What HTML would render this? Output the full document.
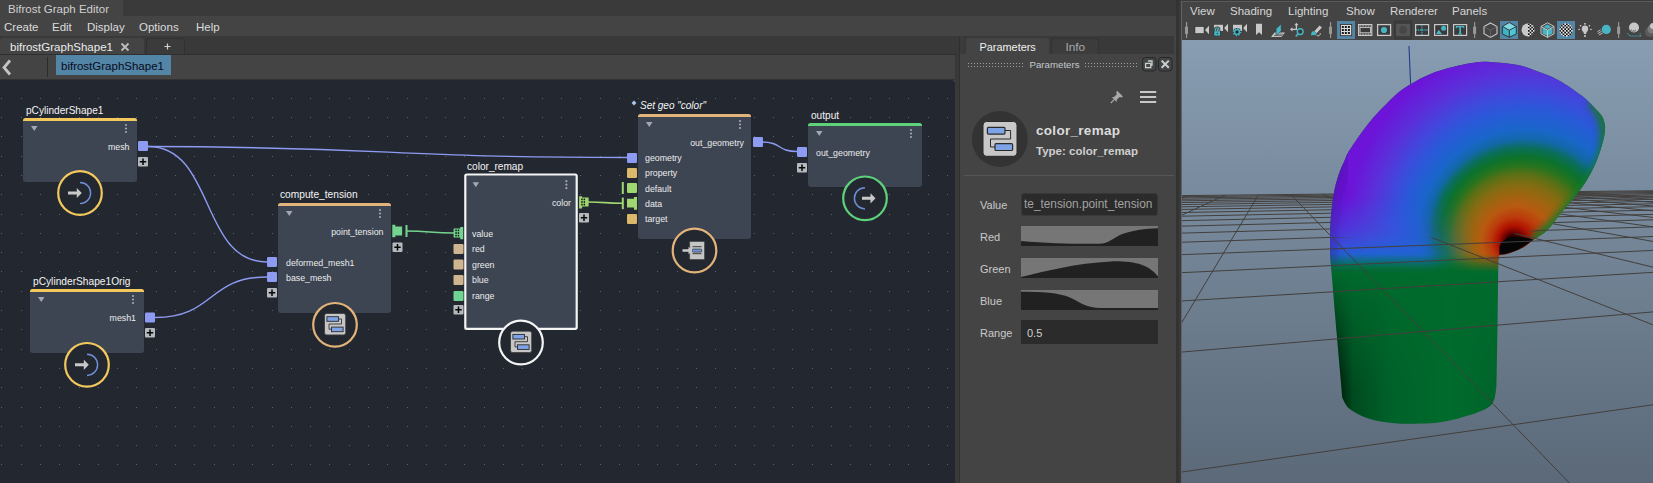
<!DOCTYPE html>
<html><head><meta charset="utf-8">
<style>
*{box-sizing:border-box;margin:0;padding:0}
html,body{width:1653px;height:483px;overflow:hidden;background:#444;font-family:"Liberation Sans",sans-serif;}
.a{position:absolute}
.t{position:absolute;white-space:nowrap;line-height:1}
svg{position:absolute;overflow:visible}
</style></head>
<body>

<div class="a" style="left:0px;top:0px;width:960px;height:16px;background:#3a3a3a;"></div>
<div class="a" style="left:0px;top:0px;width:123px;height:16px;background:#444;"></div>
<div class="t" style="left:8px;top:4px;font-size:11.5px;color:#cfcfcf;">Bifrost Graph Editor</div>
<div class="a" style="left:0px;top:16px;width:960px;height:20px;background:#444;"></div>
<div class="t" style="left:4px;top:22px;font-size:11.5px;color:#dcdcdc;">Create</div>
<div class="t" style="left:52px;top:22px;font-size:11.5px;color:#dcdcdc;">Edit</div>
<div class="t" style="left:87px;top:22px;font-size:11.5px;color:#dcdcdc;">Display</div>
<div class="t" style="left:139px;top:22px;font-size:11.5px;color:#dcdcdc;">Options</div>
<div class="t" style="left:196px;top:22px;font-size:11.5px;color:#dcdcdc;">Help</div>
<div class="a" style="left:0px;top:36px;width:959px;height:19px;background:#393939;"></div>
<div class="a" style="left:0px;top:38px;width:144px;height:16px;background:#444;border-radius:3px 3px 0 0"></div>
<div class="t" style="left:10px;top:41.6px;font-size:11.5px;color:#ececec;">bifrostGraphShape1</div>
<svg style="left:120px;top:42px" width="10" height="10"><path d="M1.5 1.5L8.5 8.5M8.5 1.5L1.5 8.5" stroke="#bdbdbd" stroke-width="1.8"/></svg>
<div class="a" style="left:146px;top:38px;width:39px;height:16px;background:#3b3b3b;border:1px solid #313131;border-bottom:none;border-radius:3px 3px 0 0"></div>
<svg style="left:163.5px;top:43px" width="8" height="8"><path d="M3.5 0.4V6.6M0.4 3.5H6.6" stroke="#d4d0cc" stroke-width="1.2"/></svg>
<div class="a" style="left:0px;top:54px;width:957px;height:1px;background:#2f2f2f;"></div>
<div class="a" style="left:0px;top:55px;width:957px;height:25px;background:#444;"></div>
<svg style="left:0;top:55px" width="50" height="25"><path d="M10 5.5 L4 12.5 L10 19.5" fill="none" stroke="#c4c4c4" stroke-width="2.8"/><rect x="47" y="2" width="1" height="20" fill="#2b2b2b"/></svg>
<div class="a" style="left:56px;top:55px;width:115px;height:20px;background:#5285a6;"></div>
<div class="t" style="left:61px;top:61px;font-size:11.5px;color:#0a0a1a;">bifrostGraphShape1</div>
<div class="a" style="left:0px;top:79px;width:957px;height:1px;background:#333;"></div>
<div class="a" style="left:0;top:80px;width:955px;height:403px;background:#232830;border-radius:0 4px 0 0;overflow:hidden">
<svg style="left:0;top:0" width="955" height="403"><path d="M1 18h1v1h-1zM21 18h1v1h-1zM40 18h1v1h-1zM59 18h1v1h-1zM79 18h1v1h-1zM98 18h1v1h-1zM117 18h1v1h-1zM136 18h1v1h-1zM156 18h1v1h-1zM175 18h1v1h-1zM194 18h1v1h-1zM214 18h1v1h-1zM233 18h1v1h-1zM252 18h1v1h-1zM272 18h1v1h-1zM291 18h1v1h-1zM310 18h1v1h-1zM329 18h1v1h-1zM349 18h1v1h-1zM368 18h1v1h-1zM387 18h1v1h-1zM407 18h1v1h-1zM426 18h1v1h-1zM445 18h1v1h-1zM464 18h1v1h-1zM484 18h1v1h-1zM503 18h1v1h-1zM522 18h1v1h-1zM542 18h1v1h-1zM561 18h1v1h-1zM580 18h1v1h-1zM600 18h1v1h-1zM619 18h1v1h-1zM638 18h1v1h-1zM657 18h1v1h-1zM677 18h1v1h-1zM696 18h1v1h-1zM715 18h1v1h-1zM735 18h1v1h-1zM754 18h1v1h-1zM773 18h1v1h-1zM792 18h1v1h-1zM812 18h1v1h-1zM831 18h1v1h-1zM850 18h1v1h-1zM870 18h1v1h-1zM889 18h1v1h-1zM908 18h1v1h-1zM928 18h1v1h-1zM947 18h1v1h-1zM1 37h1v1h-1zM21 37h1v1h-1zM40 37h1v1h-1zM59 37h1v1h-1zM79 37h1v1h-1zM98 37h1v1h-1zM117 37h1v1h-1zM136 37h1v1h-1zM156 37h1v1h-1zM175 37h1v1h-1zM194 37h1v1h-1zM214 37h1v1h-1zM233 37h1v1h-1zM252 37h1v1h-1zM272 37h1v1h-1zM291 37h1v1h-1zM310 37h1v1h-1zM329 37h1v1h-1zM349 37h1v1h-1zM368 37h1v1h-1zM387 37h1v1h-1zM407 37h1v1h-1zM426 37h1v1h-1zM445 37h1v1h-1zM464 37h1v1h-1zM484 37h1v1h-1zM503 37h1v1h-1zM522 37h1v1h-1zM542 37h1v1h-1zM561 37h1v1h-1zM580 37h1v1h-1zM600 37h1v1h-1zM619 37h1v1h-1zM638 37h1v1h-1zM657 37h1v1h-1zM677 37h1v1h-1zM696 37h1v1h-1zM715 37h1v1h-1zM735 37h1v1h-1zM754 37h1v1h-1zM773 37h1v1h-1zM792 37h1v1h-1zM812 37h1v1h-1zM831 37h1v1h-1zM850 37h1v1h-1zM870 37h1v1h-1zM889 37h1v1h-1zM908 37h1v1h-1zM928 37h1v1h-1zM947 37h1v1h-1zM1 56h1v1h-1zM21 56h1v1h-1zM40 56h1v1h-1zM59 56h1v1h-1zM79 56h1v1h-1zM98 56h1v1h-1zM117 56h1v1h-1zM136 56h1v1h-1zM156 56h1v1h-1zM175 56h1v1h-1zM194 56h1v1h-1zM214 56h1v1h-1zM233 56h1v1h-1zM252 56h1v1h-1zM272 56h1v1h-1zM291 56h1v1h-1zM310 56h1v1h-1zM329 56h1v1h-1zM349 56h1v1h-1zM368 56h1v1h-1zM387 56h1v1h-1zM407 56h1v1h-1zM426 56h1v1h-1zM445 56h1v1h-1zM464 56h1v1h-1zM484 56h1v1h-1zM503 56h1v1h-1zM522 56h1v1h-1zM542 56h1v1h-1zM561 56h1v1h-1zM580 56h1v1h-1zM600 56h1v1h-1zM619 56h1v1h-1zM638 56h1v1h-1zM657 56h1v1h-1zM677 56h1v1h-1zM696 56h1v1h-1zM715 56h1v1h-1zM735 56h1v1h-1zM754 56h1v1h-1zM773 56h1v1h-1zM792 56h1v1h-1zM812 56h1v1h-1zM831 56h1v1h-1zM850 56h1v1h-1zM870 56h1v1h-1zM889 56h1v1h-1zM908 56h1v1h-1zM928 56h1v1h-1zM947 56h1v1h-1zM1 76h1v1h-1zM21 76h1v1h-1zM40 76h1v1h-1zM59 76h1v1h-1zM79 76h1v1h-1zM98 76h1v1h-1zM117 76h1v1h-1zM136 76h1v1h-1zM156 76h1v1h-1zM175 76h1v1h-1zM194 76h1v1h-1zM214 76h1v1h-1zM233 76h1v1h-1zM252 76h1v1h-1zM272 76h1v1h-1zM291 76h1v1h-1zM310 76h1v1h-1zM329 76h1v1h-1zM349 76h1v1h-1zM368 76h1v1h-1zM387 76h1v1h-1zM407 76h1v1h-1zM426 76h1v1h-1zM445 76h1v1h-1zM464 76h1v1h-1zM484 76h1v1h-1zM503 76h1v1h-1zM522 76h1v1h-1zM542 76h1v1h-1zM561 76h1v1h-1zM580 76h1v1h-1zM600 76h1v1h-1zM619 76h1v1h-1zM638 76h1v1h-1zM657 76h1v1h-1zM677 76h1v1h-1zM696 76h1v1h-1zM715 76h1v1h-1zM735 76h1v1h-1zM754 76h1v1h-1zM773 76h1v1h-1zM792 76h1v1h-1zM812 76h1v1h-1zM831 76h1v1h-1zM850 76h1v1h-1zM870 76h1v1h-1zM889 76h1v1h-1zM908 76h1v1h-1zM928 76h1v1h-1zM947 76h1v1h-1zM1 95h1v1h-1zM21 95h1v1h-1zM40 95h1v1h-1zM59 95h1v1h-1zM79 95h1v1h-1zM98 95h1v1h-1zM117 95h1v1h-1zM136 95h1v1h-1zM156 95h1v1h-1zM175 95h1v1h-1zM194 95h1v1h-1zM214 95h1v1h-1zM233 95h1v1h-1zM252 95h1v1h-1zM272 95h1v1h-1zM291 95h1v1h-1zM310 95h1v1h-1zM329 95h1v1h-1zM349 95h1v1h-1zM368 95h1v1h-1zM387 95h1v1h-1zM407 95h1v1h-1zM426 95h1v1h-1zM445 95h1v1h-1zM464 95h1v1h-1zM484 95h1v1h-1zM503 95h1v1h-1zM522 95h1v1h-1zM542 95h1v1h-1zM561 95h1v1h-1zM580 95h1v1h-1zM600 95h1v1h-1zM619 95h1v1h-1zM638 95h1v1h-1zM657 95h1v1h-1zM677 95h1v1h-1zM696 95h1v1h-1zM715 95h1v1h-1zM735 95h1v1h-1zM754 95h1v1h-1zM773 95h1v1h-1zM792 95h1v1h-1zM812 95h1v1h-1zM831 95h1v1h-1zM850 95h1v1h-1zM870 95h1v1h-1zM889 95h1v1h-1zM908 95h1v1h-1zM928 95h1v1h-1zM947 95h1v1h-1zM1 114h1v1h-1zM21 114h1v1h-1zM40 114h1v1h-1zM59 114h1v1h-1zM79 114h1v1h-1zM98 114h1v1h-1zM117 114h1v1h-1zM136 114h1v1h-1zM156 114h1v1h-1zM175 114h1v1h-1zM194 114h1v1h-1zM214 114h1v1h-1zM233 114h1v1h-1zM252 114h1v1h-1zM272 114h1v1h-1zM291 114h1v1h-1zM310 114h1v1h-1zM329 114h1v1h-1zM349 114h1v1h-1zM368 114h1v1h-1zM387 114h1v1h-1zM407 114h1v1h-1zM426 114h1v1h-1zM445 114h1v1h-1zM464 114h1v1h-1zM484 114h1v1h-1zM503 114h1v1h-1zM522 114h1v1h-1zM542 114h1v1h-1zM561 114h1v1h-1zM580 114h1v1h-1zM600 114h1v1h-1zM619 114h1v1h-1zM638 114h1v1h-1zM657 114h1v1h-1zM677 114h1v1h-1zM696 114h1v1h-1zM715 114h1v1h-1zM735 114h1v1h-1zM754 114h1v1h-1zM773 114h1v1h-1zM792 114h1v1h-1zM812 114h1v1h-1zM831 114h1v1h-1zM850 114h1v1h-1zM870 114h1v1h-1zM889 114h1v1h-1zM908 114h1v1h-1zM928 114h1v1h-1zM947 114h1v1h-1zM1 134h1v1h-1zM21 134h1v1h-1zM40 134h1v1h-1zM59 134h1v1h-1zM79 134h1v1h-1zM98 134h1v1h-1zM117 134h1v1h-1zM136 134h1v1h-1zM156 134h1v1h-1zM175 134h1v1h-1zM194 134h1v1h-1zM214 134h1v1h-1zM233 134h1v1h-1zM252 134h1v1h-1zM272 134h1v1h-1zM291 134h1v1h-1zM310 134h1v1h-1zM329 134h1v1h-1zM349 134h1v1h-1zM368 134h1v1h-1zM387 134h1v1h-1zM407 134h1v1h-1zM426 134h1v1h-1zM445 134h1v1h-1zM464 134h1v1h-1zM484 134h1v1h-1zM503 134h1v1h-1zM522 134h1v1h-1zM542 134h1v1h-1zM561 134h1v1h-1zM580 134h1v1h-1zM600 134h1v1h-1zM619 134h1v1h-1zM638 134h1v1h-1zM657 134h1v1h-1zM677 134h1v1h-1zM696 134h1v1h-1zM715 134h1v1h-1zM735 134h1v1h-1zM754 134h1v1h-1zM773 134h1v1h-1zM792 134h1v1h-1zM812 134h1v1h-1zM831 134h1v1h-1zM850 134h1v1h-1zM870 134h1v1h-1zM889 134h1v1h-1zM908 134h1v1h-1zM928 134h1v1h-1zM947 134h1v1h-1zM1 153h1v1h-1zM21 153h1v1h-1zM40 153h1v1h-1zM59 153h1v1h-1zM79 153h1v1h-1zM98 153h1v1h-1zM117 153h1v1h-1zM136 153h1v1h-1zM156 153h1v1h-1zM175 153h1v1h-1zM194 153h1v1h-1zM214 153h1v1h-1zM233 153h1v1h-1zM252 153h1v1h-1zM272 153h1v1h-1zM291 153h1v1h-1zM310 153h1v1h-1zM329 153h1v1h-1zM349 153h1v1h-1zM368 153h1v1h-1zM387 153h1v1h-1zM407 153h1v1h-1zM426 153h1v1h-1zM445 153h1v1h-1zM464 153h1v1h-1zM484 153h1v1h-1zM503 153h1v1h-1zM522 153h1v1h-1zM542 153h1v1h-1zM561 153h1v1h-1zM580 153h1v1h-1zM600 153h1v1h-1zM619 153h1v1h-1zM638 153h1v1h-1zM657 153h1v1h-1zM677 153h1v1h-1zM696 153h1v1h-1zM715 153h1v1h-1zM735 153h1v1h-1zM754 153h1v1h-1zM773 153h1v1h-1zM792 153h1v1h-1zM812 153h1v1h-1zM831 153h1v1h-1zM850 153h1v1h-1zM870 153h1v1h-1zM889 153h1v1h-1zM908 153h1v1h-1zM928 153h1v1h-1zM947 153h1v1h-1zM1 172h1v1h-1zM21 172h1v1h-1zM40 172h1v1h-1zM59 172h1v1h-1zM79 172h1v1h-1zM98 172h1v1h-1zM117 172h1v1h-1zM136 172h1v1h-1zM156 172h1v1h-1zM175 172h1v1h-1zM194 172h1v1h-1zM214 172h1v1h-1zM233 172h1v1h-1zM252 172h1v1h-1zM272 172h1v1h-1zM291 172h1v1h-1zM310 172h1v1h-1zM329 172h1v1h-1zM349 172h1v1h-1zM368 172h1v1h-1zM387 172h1v1h-1zM407 172h1v1h-1zM426 172h1v1h-1zM445 172h1v1h-1zM464 172h1v1h-1zM484 172h1v1h-1zM503 172h1v1h-1zM522 172h1v1h-1zM542 172h1v1h-1zM561 172h1v1h-1zM580 172h1v1h-1zM600 172h1v1h-1zM619 172h1v1h-1zM638 172h1v1h-1zM657 172h1v1h-1zM677 172h1v1h-1zM696 172h1v1h-1zM715 172h1v1h-1zM735 172h1v1h-1zM754 172h1v1h-1zM773 172h1v1h-1zM792 172h1v1h-1zM812 172h1v1h-1zM831 172h1v1h-1zM850 172h1v1h-1zM870 172h1v1h-1zM889 172h1v1h-1zM908 172h1v1h-1zM928 172h1v1h-1zM947 172h1v1h-1zM1 191h1v1h-1zM21 191h1v1h-1zM40 191h1v1h-1zM59 191h1v1h-1zM79 191h1v1h-1zM98 191h1v1h-1zM117 191h1v1h-1zM136 191h1v1h-1zM156 191h1v1h-1zM175 191h1v1h-1zM194 191h1v1h-1zM214 191h1v1h-1zM233 191h1v1h-1zM252 191h1v1h-1zM272 191h1v1h-1zM291 191h1v1h-1zM310 191h1v1h-1zM329 191h1v1h-1zM349 191h1v1h-1zM368 191h1v1h-1zM387 191h1v1h-1zM407 191h1v1h-1zM426 191h1v1h-1zM445 191h1v1h-1zM464 191h1v1h-1zM484 191h1v1h-1zM503 191h1v1h-1zM522 191h1v1h-1zM542 191h1v1h-1zM561 191h1v1h-1zM580 191h1v1h-1zM600 191h1v1h-1zM619 191h1v1h-1zM638 191h1v1h-1zM657 191h1v1h-1zM677 191h1v1h-1zM696 191h1v1h-1zM715 191h1v1h-1zM735 191h1v1h-1zM754 191h1v1h-1zM773 191h1v1h-1zM792 191h1v1h-1zM812 191h1v1h-1zM831 191h1v1h-1zM850 191h1v1h-1zM870 191h1v1h-1zM889 191h1v1h-1zM908 191h1v1h-1zM928 191h1v1h-1zM947 191h1v1h-1zM1 211h1v1h-1zM21 211h1v1h-1zM40 211h1v1h-1zM59 211h1v1h-1zM79 211h1v1h-1zM98 211h1v1h-1zM117 211h1v1h-1zM136 211h1v1h-1zM156 211h1v1h-1zM175 211h1v1h-1zM194 211h1v1h-1zM214 211h1v1h-1zM233 211h1v1h-1zM252 211h1v1h-1zM272 211h1v1h-1zM291 211h1v1h-1zM310 211h1v1h-1zM329 211h1v1h-1zM349 211h1v1h-1zM368 211h1v1h-1zM387 211h1v1h-1zM407 211h1v1h-1zM426 211h1v1h-1zM445 211h1v1h-1zM464 211h1v1h-1zM484 211h1v1h-1zM503 211h1v1h-1zM522 211h1v1h-1zM542 211h1v1h-1zM561 211h1v1h-1zM580 211h1v1h-1zM600 211h1v1h-1zM619 211h1v1h-1zM638 211h1v1h-1zM657 211h1v1h-1zM677 211h1v1h-1zM696 211h1v1h-1zM715 211h1v1h-1zM735 211h1v1h-1zM754 211h1v1h-1zM773 211h1v1h-1zM792 211h1v1h-1zM812 211h1v1h-1zM831 211h1v1h-1zM850 211h1v1h-1zM870 211h1v1h-1zM889 211h1v1h-1zM908 211h1v1h-1zM928 211h1v1h-1zM947 211h1v1h-1zM1 230h1v1h-1zM21 230h1v1h-1zM40 230h1v1h-1zM59 230h1v1h-1zM79 230h1v1h-1zM98 230h1v1h-1zM117 230h1v1h-1zM136 230h1v1h-1zM156 230h1v1h-1zM175 230h1v1h-1zM194 230h1v1h-1zM214 230h1v1h-1zM233 230h1v1h-1zM252 230h1v1h-1zM272 230h1v1h-1zM291 230h1v1h-1zM310 230h1v1h-1zM329 230h1v1h-1zM349 230h1v1h-1zM368 230h1v1h-1zM387 230h1v1h-1zM407 230h1v1h-1zM426 230h1v1h-1zM445 230h1v1h-1zM464 230h1v1h-1zM484 230h1v1h-1zM503 230h1v1h-1zM522 230h1v1h-1zM542 230h1v1h-1zM561 230h1v1h-1zM580 230h1v1h-1zM600 230h1v1h-1zM619 230h1v1h-1zM638 230h1v1h-1zM657 230h1v1h-1zM677 230h1v1h-1zM696 230h1v1h-1zM715 230h1v1h-1zM735 230h1v1h-1zM754 230h1v1h-1zM773 230h1v1h-1zM792 230h1v1h-1zM812 230h1v1h-1zM831 230h1v1h-1zM850 230h1v1h-1zM870 230h1v1h-1zM889 230h1v1h-1zM908 230h1v1h-1zM928 230h1v1h-1zM947 230h1v1h-1zM1 249h1v1h-1zM21 249h1v1h-1zM40 249h1v1h-1zM59 249h1v1h-1zM79 249h1v1h-1zM98 249h1v1h-1zM117 249h1v1h-1zM136 249h1v1h-1zM156 249h1v1h-1zM175 249h1v1h-1zM194 249h1v1h-1zM214 249h1v1h-1zM233 249h1v1h-1zM252 249h1v1h-1zM272 249h1v1h-1zM291 249h1v1h-1zM310 249h1v1h-1zM329 249h1v1h-1zM349 249h1v1h-1zM368 249h1v1h-1zM387 249h1v1h-1zM407 249h1v1h-1zM426 249h1v1h-1zM445 249h1v1h-1zM464 249h1v1h-1zM484 249h1v1h-1zM503 249h1v1h-1zM522 249h1v1h-1zM542 249h1v1h-1zM561 249h1v1h-1zM580 249h1v1h-1zM600 249h1v1h-1zM619 249h1v1h-1zM638 249h1v1h-1zM657 249h1v1h-1zM677 249h1v1h-1zM696 249h1v1h-1zM715 249h1v1h-1zM735 249h1v1h-1zM754 249h1v1h-1zM773 249h1v1h-1zM792 249h1v1h-1zM812 249h1v1h-1zM831 249h1v1h-1zM850 249h1v1h-1zM870 249h1v1h-1zM889 249h1v1h-1zM908 249h1v1h-1zM928 249h1v1h-1zM947 249h1v1h-1zM1 269h1v1h-1zM21 269h1v1h-1zM40 269h1v1h-1zM59 269h1v1h-1zM79 269h1v1h-1zM98 269h1v1h-1zM117 269h1v1h-1zM136 269h1v1h-1zM156 269h1v1h-1zM175 269h1v1h-1zM194 269h1v1h-1zM214 269h1v1h-1zM233 269h1v1h-1zM252 269h1v1h-1zM272 269h1v1h-1zM291 269h1v1h-1zM310 269h1v1h-1zM329 269h1v1h-1zM349 269h1v1h-1zM368 269h1v1h-1zM387 269h1v1h-1zM407 269h1v1h-1zM426 269h1v1h-1zM445 269h1v1h-1zM464 269h1v1h-1zM484 269h1v1h-1zM503 269h1v1h-1zM522 269h1v1h-1zM542 269h1v1h-1zM561 269h1v1h-1zM580 269h1v1h-1zM600 269h1v1h-1zM619 269h1v1h-1zM638 269h1v1h-1zM657 269h1v1h-1zM677 269h1v1h-1zM696 269h1v1h-1zM715 269h1v1h-1zM735 269h1v1h-1zM754 269h1v1h-1zM773 269h1v1h-1zM792 269h1v1h-1zM812 269h1v1h-1zM831 269h1v1h-1zM850 269h1v1h-1zM870 269h1v1h-1zM889 269h1v1h-1zM908 269h1v1h-1zM928 269h1v1h-1zM947 269h1v1h-1zM1 288h1v1h-1zM21 288h1v1h-1zM40 288h1v1h-1zM59 288h1v1h-1zM79 288h1v1h-1zM98 288h1v1h-1zM117 288h1v1h-1zM136 288h1v1h-1zM156 288h1v1h-1zM175 288h1v1h-1zM194 288h1v1h-1zM214 288h1v1h-1zM233 288h1v1h-1zM252 288h1v1h-1zM272 288h1v1h-1zM291 288h1v1h-1zM310 288h1v1h-1zM329 288h1v1h-1zM349 288h1v1h-1zM368 288h1v1h-1zM387 288h1v1h-1zM407 288h1v1h-1zM426 288h1v1h-1zM445 288h1v1h-1zM464 288h1v1h-1zM484 288h1v1h-1zM503 288h1v1h-1zM522 288h1v1h-1zM542 288h1v1h-1zM561 288h1v1h-1zM580 288h1v1h-1zM600 288h1v1h-1zM619 288h1v1h-1zM638 288h1v1h-1zM657 288h1v1h-1zM677 288h1v1h-1zM696 288h1v1h-1zM715 288h1v1h-1zM735 288h1v1h-1zM754 288h1v1h-1zM773 288h1v1h-1zM792 288h1v1h-1zM812 288h1v1h-1zM831 288h1v1h-1zM850 288h1v1h-1zM870 288h1v1h-1zM889 288h1v1h-1zM908 288h1v1h-1zM928 288h1v1h-1zM947 288h1v1h-1zM1 307h1v1h-1zM21 307h1v1h-1zM40 307h1v1h-1zM59 307h1v1h-1zM79 307h1v1h-1zM98 307h1v1h-1zM117 307h1v1h-1zM136 307h1v1h-1zM156 307h1v1h-1zM175 307h1v1h-1zM194 307h1v1h-1zM214 307h1v1h-1zM233 307h1v1h-1zM252 307h1v1h-1zM272 307h1v1h-1zM291 307h1v1h-1zM310 307h1v1h-1zM329 307h1v1h-1zM349 307h1v1h-1zM368 307h1v1h-1zM387 307h1v1h-1zM407 307h1v1h-1zM426 307h1v1h-1zM445 307h1v1h-1zM464 307h1v1h-1zM484 307h1v1h-1zM503 307h1v1h-1zM522 307h1v1h-1zM542 307h1v1h-1zM561 307h1v1h-1zM580 307h1v1h-1zM600 307h1v1h-1zM619 307h1v1h-1zM638 307h1v1h-1zM657 307h1v1h-1zM677 307h1v1h-1zM696 307h1v1h-1zM715 307h1v1h-1zM735 307h1v1h-1zM754 307h1v1h-1zM773 307h1v1h-1zM792 307h1v1h-1zM812 307h1v1h-1zM831 307h1v1h-1zM850 307h1v1h-1zM870 307h1v1h-1zM889 307h1v1h-1zM908 307h1v1h-1zM928 307h1v1h-1zM947 307h1v1h-1zM1 327h1v1h-1zM21 327h1v1h-1zM40 327h1v1h-1zM59 327h1v1h-1zM79 327h1v1h-1zM98 327h1v1h-1zM117 327h1v1h-1zM136 327h1v1h-1zM156 327h1v1h-1zM175 327h1v1h-1zM194 327h1v1h-1zM214 327h1v1h-1zM233 327h1v1h-1zM252 327h1v1h-1zM272 327h1v1h-1zM291 327h1v1h-1zM310 327h1v1h-1zM329 327h1v1h-1zM349 327h1v1h-1zM368 327h1v1h-1zM387 327h1v1h-1zM407 327h1v1h-1zM426 327h1v1h-1zM445 327h1v1h-1zM464 327h1v1h-1zM484 327h1v1h-1zM503 327h1v1h-1zM522 327h1v1h-1zM542 327h1v1h-1zM561 327h1v1h-1zM580 327h1v1h-1zM600 327h1v1h-1zM619 327h1v1h-1zM638 327h1v1h-1zM657 327h1v1h-1zM677 327h1v1h-1zM696 327h1v1h-1zM715 327h1v1h-1zM735 327h1v1h-1zM754 327h1v1h-1zM773 327h1v1h-1zM792 327h1v1h-1zM812 327h1v1h-1zM831 327h1v1h-1zM850 327h1v1h-1zM870 327h1v1h-1zM889 327h1v1h-1zM908 327h1v1h-1zM928 327h1v1h-1zM947 327h1v1h-1zM1 346h1v1h-1zM21 346h1v1h-1zM40 346h1v1h-1zM59 346h1v1h-1zM79 346h1v1h-1zM98 346h1v1h-1zM117 346h1v1h-1zM136 346h1v1h-1zM156 346h1v1h-1zM175 346h1v1h-1zM194 346h1v1h-1zM214 346h1v1h-1zM233 346h1v1h-1zM252 346h1v1h-1zM272 346h1v1h-1zM291 346h1v1h-1zM310 346h1v1h-1zM329 346h1v1h-1zM349 346h1v1h-1zM368 346h1v1h-1zM387 346h1v1h-1zM407 346h1v1h-1zM426 346h1v1h-1zM445 346h1v1h-1zM464 346h1v1h-1zM484 346h1v1h-1zM503 346h1v1h-1zM522 346h1v1h-1zM542 346h1v1h-1zM561 346h1v1h-1zM580 346h1v1h-1zM600 346h1v1h-1zM619 346h1v1h-1zM638 346h1v1h-1zM657 346h1v1h-1zM677 346h1v1h-1zM696 346h1v1h-1zM715 346h1v1h-1zM735 346h1v1h-1zM754 346h1v1h-1zM773 346h1v1h-1zM792 346h1v1h-1zM812 346h1v1h-1zM831 346h1v1h-1zM850 346h1v1h-1zM870 346h1v1h-1zM889 346h1v1h-1zM908 346h1v1h-1zM928 346h1v1h-1zM947 346h1v1h-1zM1 365h1v1h-1zM21 365h1v1h-1zM40 365h1v1h-1zM59 365h1v1h-1zM79 365h1v1h-1zM98 365h1v1h-1zM117 365h1v1h-1zM136 365h1v1h-1zM156 365h1v1h-1zM175 365h1v1h-1zM194 365h1v1h-1zM214 365h1v1h-1zM233 365h1v1h-1zM252 365h1v1h-1zM272 365h1v1h-1zM291 365h1v1h-1zM310 365h1v1h-1zM329 365h1v1h-1zM349 365h1v1h-1zM368 365h1v1h-1zM387 365h1v1h-1zM407 365h1v1h-1zM426 365h1v1h-1zM445 365h1v1h-1zM464 365h1v1h-1zM484 365h1v1h-1zM503 365h1v1h-1zM522 365h1v1h-1zM542 365h1v1h-1zM561 365h1v1h-1zM580 365h1v1h-1zM600 365h1v1h-1zM619 365h1v1h-1zM638 365h1v1h-1zM657 365h1v1h-1zM677 365h1v1h-1zM696 365h1v1h-1zM715 365h1v1h-1zM735 365h1v1h-1zM754 365h1v1h-1zM773 365h1v1h-1zM792 365h1v1h-1zM812 365h1v1h-1zM831 365h1v1h-1zM850 365h1v1h-1zM870 365h1v1h-1zM889 365h1v1h-1zM908 365h1v1h-1zM928 365h1v1h-1zM947 365h1v1h-1zM1 384h1v1h-1zM21 384h1v1h-1zM40 384h1v1h-1zM59 384h1v1h-1zM79 384h1v1h-1zM98 384h1v1h-1zM117 384h1v1h-1zM136 384h1v1h-1zM156 384h1v1h-1zM175 384h1v1h-1zM194 384h1v1h-1zM214 384h1v1h-1zM233 384h1v1h-1zM252 384h1v1h-1zM272 384h1v1h-1zM291 384h1v1h-1zM310 384h1v1h-1zM329 384h1v1h-1zM349 384h1v1h-1zM368 384h1v1h-1zM387 384h1v1h-1zM407 384h1v1h-1zM426 384h1v1h-1zM445 384h1v1h-1zM464 384h1v1h-1zM484 384h1v1h-1zM503 384h1v1h-1zM522 384h1v1h-1zM542 384h1v1h-1zM561 384h1v1h-1zM580 384h1v1h-1zM600 384h1v1h-1zM619 384h1v1h-1zM638 384h1v1h-1zM657 384h1v1h-1zM677 384h1v1h-1zM696 384h1v1h-1zM715 384h1v1h-1zM735 384h1v1h-1zM754 384h1v1h-1zM773 384h1v1h-1zM792 384h1v1h-1zM812 384h1v1h-1zM831 384h1v1h-1zM850 384h1v1h-1zM870 384h1v1h-1zM889 384h1v1h-1zM908 384h1v1h-1zM928 384h1v1h-1zM947 384h1v1h-1z" fill="#59606a"/></svg>
</div>
<svg style="left:0;top:0" width="955" height="483"><path d="M148 146.5 C 390 147, 390 157.5, 627 157.5" fill="none" stroke="#8e9bf3" stroke-width="1.4"/><path d="M148 146.5 C 215 146.5, 200 262, 267 262" fill="none" stroke="#8e9bf3" stroke-width="1.4"/><path d="M155 317.5 C 215 317.5, 207 277, 267 277" fill="none" stroke="#8e9bf3" stroke-width="1.4"/><path d="M762 142 C 782 142, 777 151.5, 797 151.5" fill="none" stroke="#8e9bf3" stroke-width="1.4"/><path d="M406 231 C 430 231, 430 233, 454 233" fill="none" stroke="#74d48f" stroke-width="1.6"/><rect x="405.5" y="225" width="2" height="12" fill="#74d48f"/><path d="M588 202 C 605 202, 605 203.3, 622 203.3" fill="none" stroke="#9fd770" stroke-width="1.6"/><rect x="621.8" y="197.6" width="2" height="11.6" fill="#9fd770"/><rect x="621.8" y="182" width="2" height="12" fill="#9fd770"/><rect x="23" y="118" width="114" height="64" rx="3" fill="#3d4553"/><path d="M23 121V120.5a2.5 2.5 0 0 1 2.5 -2.5H134.5a2.5 2.5 0 0 1 2.5 2.5V121z" fill="#f3c95d"/><path d="M31 126H37.5L34.25 131z" fill="#a3a8b0"/><circle cx="126" cy="125.0" r="1.1" fill="#a3a8b0"/><circle cx="126" cy="128.5" r="1.1" fill="#a3a8b0"/><circle cx="126" cy="132.0" r="1.1" fill="#a3a8b0"/><rect x="30" y="289" width="114" height="64" rx="3" fill="#3d4553"/><path d="M30 292V291.5a2.5 2.5 0 0 1 2.5 -2.5H141.5a2.5 2.5 0 0 1 2.5 2.5V292z" fill="#f3c95d"/><path d="M38 297H44.5L41.25 302z" fill="#a3a8b0"/><circle cx="133" cy="296.0" r="1.1" fill="#a3a8b0"/><circle cx="133" cy="299.5" r="1.1" fill="#a3a8b0"/><circle cx="133" cy="303.0" r="1.1" fill="#a3a8b0"/><rect x="278" y="203" width="113" height="110" rx="3" fill="#3d4553"/><path d="M278 206V205.5a2.5 2.5 0 0 1 2.5 -2.5H388.5a2.5 2.5 0 0 1 2.5 2.5V206z" fill="#e3b47a"/><path d="M286 211H292.5L289.25 216z" fill="#a3a8b0"/><circle cx="380" cy="210.0" r="1.1" fill="#a3a8b0"/><circle cx="380" cy="213.5" r="1.1" fill="#a3a8b0"/><circle cx="380" cy="217.0" r="1.1" fill="#a3a8b0"/><rect x="465.3" y="174.5" width="111.39999999999999" height="154.3" rx="1.5" fill="#3d4553" stroke="#f4f4f4" stroke-width="2.2"/><path d="M472.6 182.2H479.1L475.85 187.2z" fill="#a3a8b0"/><circle cx="566.4" cy="181.2" r="1.1" fill="#a3a8b0"/><circle cx="566.4" cy="184.7" r="1.1" fill="#a3a8b0"/><circle cx="566.4" cy="188.2" r="1.1" fill="#a3a8b0"/><rect x="638" y="114" width="113" height="125" rx="3" fill="#3d4553"/><path d="M638 117V116.5a2.5 2.5 0 0 1 2.5 -2.5H748.5a2.5 2.5 0 0 1 2.5 2.5V117z" fill="#e3b47a"/><path d="M646 122H652.5L649.25 127z" fill="#a3a8b0"/><circle cx="740" cy="121.0" r="1.1" fill="#a3a8b0"/><circle cx="740" cy="124.5" r="1.1" fill="#a3a8b0"/><circle cx="740" cy="128.0" r="1.1" fill="#a3a8b0"/><rect x="808" y="123" width="114" height="64" rx="3" fill="#3d4553"/><path d="M808 126V125.5a2.5 2.5 0 0 1 2.5 -2.5H919.5a2.5 2.5 0 0 1 2.5 2.5V126z" fill="#5ed17b"/><path d="M816 131H822.5L819.25 136z" fill="#a3a8b0"/><circle cx="911" cy="130.0" r="1.1" fill="#a3a8b0"/><circle cx="911" cy="133.5" r="1.1" fill="#a3a8b0"/><circle cx="911" cy="137.0" r="1.1" fill="#a3a8b0"/><circle cx="80" cy="193" r="21.8" fill="#232830" stroke="#f3c95d" stroke-width="2.2"/><path d="M68 191.5h8.8v-3.6l5 5.1-5 5.1v-3.6h-8.8z" fill="#c9c9c9"/><path d="M80 182.4A10.6 10.6 0 0 1 80 203.6" fill="none" stroke="#6f8fd8" stroke-width="1.45"/><circle cx="87" cy="364.8" r="21.8" fill="#232830" stroke="#f3c95d" stroke-width="2.2"/><path d="M75 363.3h8.8v-3.6l5 5.1-5 5.1v-3.6h-8.8z" fill="#c9c9c9"/><path d="M87 354.2A10.6 10.6 0 0 1 87 375.40000000000003" fill="none" stroke="#6f8fd8" stroke-width="1.45"/><circle cx="335" cy="324.8" r="21.8" fill="#232830" stroke="#e3b47a" stroke-width="2.2"/><rect x="324.5" y="313.5" width="21.2" height="21.4" rx="2.2" fill="#c6c6c6" stroke="#3a3a3a" stroke-width="0.8"/><path d="M338.5 319.0H341.5V324.0H329.0V329.2H331.5" fill="none" stroke="#333" stroke-width="0.9"/><rect x="326.9" y="316.7" width="11.6" height="4.6" fill="#7ea3e6" stroke="#2b2b2b" stroke-width="0.9"/><rect x="331.5" y="327.1" width="11.6" height="4.6" fill="#7ea3e6" stroke="#2b2b2b" stroke-width="0.9"/><circle cx="521" cy="342.5" r="21.8" fill="#232830" stroke="#f4f4f4" stroke-width="2.2"/><rect x="510.5" y="331.2" width="21.2" height="21.4" rx="2.2" fill="#c6c6c6" stroke="#3a3a3a" stroke-width="0.8"/><path d="M524.5 336.7H527.5V341.7H515.0V346.9H517.5" fill="none" stroke="#333" stroke-width="0.9"/><rect x="512.9" y="334.4" width="11.6" height="4.6" fill="#7ea3e6" stroke="#2b2b2b" stroke-width="0.9"/><rect x="517.5" y="344.8" width="11.6" height="4.6" fill="#7ea3e6" stroke="#2b2b2b" stroke-width="0.9"/><circle cx="694.5" cy="250.5" r="21.8" fill="#232830" stroke="#e3b47a" stroke-width="2.2"/><rect x="689.8" y="241.7" width="14.5" height="17.6" fill="#c6c6c6" stroke="#555" stroke-width="0.6"/><path d="M692.5 246.7H701.5M692.5 253.7H701.5" stroke="#3a3a3a" stroke-width="1"/><rect x="692.2" y="249.1" width="9.6" height="3" rx="1" fill="#6f95de" stroke="#2b2b2b" stroke-width="0.7"/><path d="M682.5 249.3h6v-2.6l4 3.8-4 3.8v-2.6h-6z" fill="#c9c9c9"/><circle cx="865" cy="198.3" r="21.8" fill="#232830" stroke="#5ed17b" stroke-width="2.2"/><path d="M862 196.8h8.5v-3.6l5 5.1-5 5.1v-3.6h-8.5z" fill="#c9c9c9"/><path d="M865 187.70000000000002A10.6 10.6 0 0 0 865 208.9" fill="none" stroke="#6f8fd8" stroke-width="1.45"/><rect x="138" y="141" width="10" height="10" rx="1.2" fill="#8e9bf3"/><rect x="138" y="157" width="10" height="9.5" rx="1" fill="#b5b9bd"/><path d="M143 158.6V164.9M139.8 161.75H146.2" stroke="#050505" stroke-width="1.5"/><rect x="145" y="312.5" width="10" height="10" rx="1.2" fill="#8e9bf3"/><rect x="145" y="328" width="10" height="9.5" rx="1" fill="#b5b9bd"/><path d="M150 329.6V335.9M146.8 332.75H153.2" stroke="#050505" stroke-width="1.5"/><path d="M392.3 224.8h3v1.7h6.8v9h-6.8v1.8h-3z" fill="#74d48f"/><rect x="392.5" y="242.5" width="10" height="9.5" rx="1" fill="#b5b9bd"/><path d="M397.5 244.1V250.4M394.3 247.25H400.7" stroke="#050505" stroke-width="1.5"/><rect x="267" y="257" width="10" height="10" rx="1.2" fill="#8e9bf3"/><rect x="267" y="272" width="10" height="10" rx="1.2" fill="#8e9bf3"/><rect x="267" y="288" width="10" height="9.5" rx="1" fill="#b5b9bd"/><path d="M272 289.6V295.9M268.8 292.75H275.2" stroke="#050505" stroke-width="1.5"/><path d="M463.2 227h-3v1.5h-6.6v9h6.6v1.8h3z" fill="#74d48f"/><rect x="455.3" y="229.6" width="1.5" height="1.6" fill="#111"/><rect x="457.7" y="229.6" width="1.5" height="1.6" fill="#111"/><rect x="455.3" y="232.2" width="1.5" height="1.6" fill="#111"/><rect x="457.7" y="232.2" width="1.5" height="1.6" fill="#111"/><rect x="455.3" y="234.79999999999998" width="1.5" height="1.6" fill="#111"/><rect x="457.7" y="234.79999999999998" width="1.5" height="1.6" fill="#111"/><rect x="453.5" y="244" width="10" height="10" rx="1.2" fill="#cfb58f"/><rect x="453.5" y="259.5" width="10" height="10" rx="1.2" fill="#cfb58f"/><rect x="453.5" y="275" width="10" height="10" rx="1.2" fill="#cfb58f"/><rect x="453.5" y="291" width="10" height="10" rx="1.2" fill="#6fd492"/><rect x="453.5" y="305" width="10" height="9.5" rx="1" fill="#b5b9bd"/><path d="M458.5 306.6V312.9M455.3 309.75H461.7" stroke="#050505" stroke-width="1.5"/><path d="M579.1 196.2h3v1.3h6.5v9h-6.5v2.1h-3z" fill="#9fd770"/><rect x="581.2" y="198.6" width="1.5" height="1.6" fill="#111"/><rect x="583.6" y="198.6" width="1.5" height="1.6" fill="#111"/><rect x="581.2" y="201.2" width="1.5" height="1.6" fill="#111"/><rect x="583.6" y="201.2" width="1.5" height="1.6" fill="#111"/><rect x="581.2" y="203.79999999999998" width="1.5" height="1.6" fill="#111"/><rect x="583.6" y="203.79999999999998" width="1.5" height="1.6" fill="#111"/><rect x="579" y="213" width="10" height="9.5" rx="1" fill="#b5b9bd"/><path d="M584 214.6V220.9M580.8 217.75H587.2" stroke="#050505" stroke-width="1.5"/><rect x="627" y="153" width="10" height="10" rx="1.2" fill="#8e9bf3"/><rect x="627" y="168" width="10" height="10" rx="1.2" fill="#dbb96b"/><rect x="627" y="183" width="10" height="10" rx="1.2" fill="#9fd770"/><path d="M637 197h-3v1.7h-7v8.8h7v2.2h3z" fill="#9fd770"/><rect x="627" y="214" width="10" height="10" rx="1.2" fill="#dbb96b"/><rect x="753" y="137" width="10" height="10" rx="1.2" fill="#8e9bf3"/><rect x="797" y="147" width="10" height="10" rx="1.2" fill="#8e9bf3"/><rect x="797" y="163" width="10" height="9.5" rx="1" fill="#b5b9bd"/><path d="M802 164.6V170.9M798.8 167.75H805.2" stroke="#050505" stroke-width="1.5"/></svg>
<div class="t" style="left:26px;top:105.5px;font-size:10.1px;color:#f4f4f4;">pCylinderShape1</div>
<div class="t" style="left:33px;top:276.5px;font-size:10.2px;color:#f4f4f4;">pCylinderShape1Orig</div>
<div class="t" style="left:280px;top:190px;font-size:10.2px;color:#f4f4f4;">compute_tension</div>
<div class="t" style="left:467px;top:161.5px;font-size:10.1px;color:#f4f4f4;">color_remap</div>
<svg style="left:630px;top:99px" width="8" height="8"><path d="M4 1.6L6.4 4L4 6.4L1.6 4z" fill="#a9c8ee"/></svg>
<div class="t" style="left:640px;top:100.5px;font-size:10px;color:#f4f4f4;font-style:italic">Set geo "color"</div>
<div class="t" style="left:811px;top:110.5px;font-size:10.1px;color:#f4f4f4;">output</div>
<div class="t" style="right:1523.5px;top:142.9px;font-size:8.8px;color:#ececec">mesh</div>
<div class="t" style="right:1517px;top:313.9px;font-size:8.8px;color:#ececec">mesh1</div>
<div class="t" style="right:1269.5px;top:227.9px;font-size:8.8px;color:#ececec">point_tension</div>
<div class="t" style="left:286px;top:258.9px;font-size:8.8px;color:#ececec">deformed_mesh1</div>
<div class="t" style="left:286px;top:273.9px;font-size:8.8px;color:#ececec">base_mesh</div>
<div class="t" style="right:1082px;top:198.9px;font-size:8.8px;color:#ececec">color</div>
<div class="t" style="left:472px;top:229.9px;font-size:8.8px;color:#ececec">value</div>
<div class="t" style="left:472px;top:245.4px;font-size:8.8px;color:#ececec">red</div>
<div class="t" style="left:472px;top:260.9px;font-size:8.8px;color:#ececec">green</div>
<div class="t" style="left:472px;top:276.4px;font-size:8.8px;color:#ececec">blue</div>
<div class="t" style="left:472px;top:292.4px;font-size:8.8px;color:#ececec">range</div>
<div class="t" style="right:909px;top:138.9px;font-size:8.8px;color:#ececec">out_geometry</div>
<div class="t" style="left:645px;top:154.4px;font-size:8.8px;color:#ececec">geometry</div>
<div class="t" style="left:645px;top:169.4px;font-size:8.8px;color:#ececec">property</div>
<div class="t" style="left:645px;top:184.9px;font-size:8.8px;color:#ececec">default</div>
<div class="t" style="left:645px;top:199.9px;font-size:8.8px;color:#ececec">data</div>
<div class="t" style="left:645px;top:215.4px;font-size:8.8px;color:#ececec">target</div>
<div class="t" style="left:816px;top:148.9px;font-size:8.8px;color:#ececec">out_geometry</div>
<div class="a" style="left:955px;top:55px;width:4px;height:428px;background:#393939;"></div>
<div class="a" style="left:958.6px;top:36px;width:1.4px;height:447px;background:#303030;"></div>
<div class="a" style="left:960px;top:36px;width:4.5px;height:18px;background:#3b3b3b;"></div>
<div class="a" style="left:960px;top:0px;width:216px;height:16px;background:#3a3a3a;"></div>
<div class="a" style="left:964px;top:36px;width:210px;height:18px;background:#393939;"></div>
<div class="a" style="left:966px;top:38px;width:83px;height:16px;background:#444;border-radius:3px 3px 0 0"></div>
<div class="t" style="left:979.5px;top:42px;font-size:10.9px;color:#f0f0f0;">Parameters</div>
<div class="a" style="left:1051px;top:38px;width:48px;height:16px;background:#3c3c3c;border:1px solid #333;border-bottom:none;border-radius:3px 3px 0 0"></div>
<div class="t" style="left:1065.5px;top:42px;font-size:11.8px;color:#a9a9a9;">Info</div>
<svg style="left:0;top:0" width="1653" height="483"><path d="M968 63h1v1h-1zM968 66h1v1h-1zM971 63h1v1h-1zM971 66h1v1h-1zM974 63h1v1h-1zM974 66h1v1h-1zM977 63h1v1h-1zM977 66h1v1h-1zM980 63h1v1h-1zM980 66h1v1h-1zM983 63h1v1h-1zM983 66h1v1h-1zM986 63h1v1h-1zM986 66h1v1h-1zM989 63h1v1h-1zM989 66h1v1h-1zM992 63h1v1h-1zM992 66h1v1h-1zM995 63h1v1h-1zM995 66h1v1h-1zM998 63h1v1h-1zM998 66h1v1h-1zM1001 63h1v1h-1zM1001 66h1v1h-1zM1004 63h1v1h-1zM1004 66h1v1h-1zM1007 63h1v1h-1zM1007 66h1v1h-1zM1010 63h1v1h-1zM1010 66h1v1h-1zM1013 63h1v1h-1zM1013 66h1v1h-1zM1016 63h1v1h-1zM1016 66h1v1h-1zM1019 63h1v1h-1zM1019 66h1v1h-1zM1022 63h1v1h-1zM1022 66h1v1h-1zM1085 63h1v1h-1zM1085 66h1v1h-1zM1088 63h1v1h-1zM1088 66h1v1h-1zM1091 63h1v1h-1zM1091 66h1v1h-1zM1094 63h1v1h-1zM1094 66h1v1h-1zM1097 63h1v1h-1zM1097 66h1v1h-1zM1100 63h1v1h-1zM1100 66h1v1h-1zM1103 63h1v1h-1zM1103 66h1v1h-1zM1106 63h1v1h-1zM1106 66h1v1h-1zM1109 63h1v1h-1zM1109 66h1v1h-1zM1112 63h1v1h-1zM1112 66h1v1h-1zM1115 63h1v1h-1zM1115 66h1v1h-1zM1118 63h1v1h-1zM1118 66h1v1h-1zM1121 63h1v1h-1zM1121 66h1v1h-1zM1124 63h1v1h-1zM1124 66h1v1h-1zM1127 63h1v1h-1zM1127 66h1v1h-1zM1130 63h1v1h-1zM1130 66h1v1h-1zM1133 63h1v1h-1zM1133 66h1v1h-1zM1136 63h1v1h-1zM1136 66h1v1h-1z" fill="#a0a0a0"/></svg>
<div class="t" style="left:1029.5px;top:60.3px;font-size:9.7px;color:#c3c7cc;">Parameters</div>
<svg style="left:1142px;top:57px" width="32" height="15"><rect x="0.5" y="0.5" width="13.5" height="13.5" rx="3" fill="#444" stroke="#262626"/><rect x="16.5" y="0.5" width="13.5" height="13.5" rx="3" fill="#444" stroke="#262626"/><path d="M6 4H10V8H8.5" fill="none" stroke="#c9d0d3" stroke-width="1.3"/><rect x="3.6" y="6.4" width="5.2" height="4.2" fill="none" stroke="#c9d0d3" stroke-width="1.3"/><path d="M19.6 3.6L26.8 10.8M26.8 3.6L19.6 10.8" stroke="#c9d0d3" stroke-width="2"/></svg>
<svg style="left:1110px;top:90px" width="14" height="14"><path d="M7.2 0.8L13 6.6L11.6 7.6L9.6 7L6.8 9.8L6.6 12L1.8 7.2L4 7L6.8 4.2L6.2 2.2z" fill="#a9a9a9"/><path d="M4.2 9.6L0.8 13" stroke="#a9a9a9" stroke-width="1.2"/></svg>
<svg style="left:1140px;top:90px" width="17" height="14"><rect x="0" y="1" width="16.2" height="2" fill="#c8c8c8"/><rect x="0" y="6" width="16.2" height="2" fill="#c8c8c8"/><rect x="0" y="11" width="16.2" height="2" fill="#c8c8c8"/></svg>
<svg style="left:0;top:0" width="1653" height="483"><circle cx="999.8" cy="139" r="28" fill="#333"/><rect x="983" y="121.5" width="34" height="34.8" rx="3.5" fill="#c8c8c8" stroke="#2a2a2a" stroke-width="1"/><path d="M1005 130.5H1010.6V139H990.5V147H995" fill="none" stroke="#2a2a2a" stroke-width="1"/><rect x="987.4" y="127.3" width="17.6" height="6.8" rx="1" fill="#7ea3e6" stroke="#2a2a2a" stroke-width="1.2"/><rect x="995" y="143.7" width="17.6" height="6.8" rx="1" fill="#7ea3e6" stroke="#2a2a2a" stroke-width="1.2"/></svg>
<div class="t" style="left:1036px;top:124px;font-size:13.5px;color:#dcdcdc;font-weight:bold;letter-spacing:0.3px">color_remap</div>
<div class="t" style="left:1036px;top:145.5px;font-size:11.5px;color:#cfcfcf;font-weight:bold">Type: color_remap</div>
<div class="a" style="left:964px;top:175px;width:210px;height:1px;background:#555;"></div>
<div class="t" style="left:980px;top:199.5px;font-size:11px;color:#c9c9c9;">Value</div>
<div class="t" style="left:980px;top:232px;font-size:11px;color:#c9c9c9;">Red</div>
<div class="t" style="left:980px;top:264px;font-size:11px;color:#c9c9c9;">Green</div>
<div class="t" style="left:980px;top:296px;font-size:11px;color:#c9c9c9;">Blue</div>
<div class="t" style="left:980px;top:328px;font-size:11px;color:#c9c9c9;">Range</div>
<div class="a" style="left:1021px;top:192.5px;width:137px;height:23px;background:#2b2b2b;border:1px solid #383838;border-radius:3px"></div>
<div class="a" style="left:1022px;top:193px;width:135px;height:21px;overflow:hidden"><div class="t" style="left:2px;top:6.3px;font-size:11.85px;color:#a2a2a2">te_tension.point_tension</div></div>
<svg style="left:1021px;top:226px" width="137" height="20"><rect width="137" height="20" fill="#767676"/><path d="M0 15 C 25 17.5, 55 18, 78 17.8 C 88 17.5, 92 12, 100 8.5 C 112 4, 125 2.4, 137 2.2 V20 H0z" fill="#212121"/></svg>
<svg style="left:1021px;top:258px" width="137" height="20"><rect width="137" height="20" fill="#767676"/><path d="M0 19 C 25 13, 55 5, 90 3.4 C 115 3, 128 7, 137 18.5 V20 H0z" fill="#212121"/></svg>
<svg style="left:1021px;top:290px" width="137" height="20"><rect width="137" height="20" fill="#767676"/><path d="M0 1.8 C 20 1.8, 38 2.5, 50 8 C 60 13, 65 17.5, 80 18 H137 V20 H0z" fill="#212121"/></svg>
<div class="a" style="left:1021px;top:320px;width:137px;height:24px;background:#2b2b2b;"></div>
<div class="t" style="left:1027px;top:328px;font-size:11px;color:#d0d0d0;">0.5</div>
<div class="a" style="left:1175.5px;top:0px;width:3.5px;height:483px;background:#333;"></div>
<div class="a" style="left:1179px;top:0px;width:474px;height:483px;background:#3a3a3a;"></div>
<div class="a" style="left:1180.5px;top:1px;width:472.5px;height:482px;background:#444;border-left:1.5px solid #626262;border-top:1px solid #5a5a5a"></div>
<div class="t" style="left:1190px;top:6px;font-size:11.5px;color:#d6d6d6;">View</div>
<div class="t" style="left:1230px;top:6px;font-size:11.5px;color:#d6d6d6;">Shading</div>
<div class="t" style="left:1288px;top:6px;font-size:11.5px;color:#d6d6d6;">Lighting</div>
<div class="t" style="left:1346px;top:6px;font-size:11.5px;color:#d6d6d6;">Show</div>
<div class="t" style="left:1390px;top:6px;font-size:11.5px;color:#d6d6d6;">Renderer</div>
<div class="t" style="left:1452px;top:6px;font-size:11.5px;color:#d6d6d6;">Panels</div>
<svg style="left:0;top:0" width="1653" height="483"><rect x="1186.0" y="22" width="1.1" height="16" fill="#9a9a9a"/><rect x="1185.0" y="26.5" width="3" height="7.5" rx="0.8" fill="#999"/><rect x="1330.0" y="22" width="1.1" height="16" fill="#9a9a9a"/><rect x="1329.0" y="26.5" width="3" height="7.5" rx="0.8" fill="#999"/><rect x="1474.1" y="22" width="1.1" height="16" fill="#9a9a9a"/><rect x="1473.1" y="26.5" width="3" height="7.5" rx="0.8" fill="#999"/><rect x="1618.1" y="22" width="1.1" height="16" fill="#9a9a9a"/><rect x="1617.1" y="26.5" width="3" height="7.5" rx="0.8" fill="#999"/><rect x="1195" y="26.7" width="9" height="6.7" fill="#c8c8c8" stroke="#2a2a2a" stroke-width="0.5"/><path d="M1209 25.8V34.2L1205 30z" fill="#c8c8c8"/><path d="M1214 24.8H1223V31H1214z" fill="#c8c8c8"/><path d="M1228 23.8V32.2L1224.2 28z" fill="#c8c8c8"/><path d="M1215.4 31V29.6a1.8 1.8 0 0 1 3.6 0V31" fill="none" stroke="#2a2a2a" stroke-width="2.6"/><rect x="1213.6" y="31" width="7.2" height="5" fill="#2a2a2a"/><path d="M1215.4 31V29.6a1.8 1.8 0 0 1 3.6 0V31" fill="none" stroke="#47b6c4" stroke-width="1.3"/><rect x="1214.2" y="31.2" width="6" height="4.4" fill="#47b6c4"/><rect x="1216.7" y="33" width="1.2" height="1" fill="#2a2a2a"/><path d="M1233 24.8H1242V31H1233z" fill="#c8c8c8"/><path d="M1247 23.8V32.2L1243.2 28z" fill="#c8c8c8"/><circle cx="1237" cy="32" r="3.9" fill="#2a2a2a"/><circle cx="1237" cy="32" r="2.5" fill="none" stroke="#47b6c4" stroke-width="1.6"/><circle cx="1237" cy="32" r="3.6" fill="none" stroke="#47b6c4" stroke-width="1.3" stroke-dasharray="1.3 1.5"/><path d="M1256 23.8H1262V35L1259 32.2L1256 35z" fill="#c8c8c8"/><path d="M1271 36.9L1274.6 32.6H1285L1281.4 36.9z" fill="#c8c8c8"/><path d="M1275.5 34.2H1283M1274 35.6H1282" stroke="#444" stroke-width="0.7"/><path d="M1276.1 28.7L1281.2 24.1V31.1L1276.1 35.7z" fill="#47b6c4" stroke="#2a2a2a" stroke-width="0.4"/><path d="M1291.5 29.3H1296.4V24.5" fill="none" stroke="#c8c8c8" stroke-width="1.3"/><path d="M1290 29.3L1292.5 27.2V31.4z M1296.4 22.8L1294.3 25.3H1298.5z" fill="#c8c8c8"/><circle cx="1300.2" cy="31.6" r="2.9" fill="#3a3a3a" stroke="#47b6c4" stroke-width="1.4"/><path d="M1298.2 33.8L1295.8 36.4" stroke="#47b6c4" stroke-width="1.6"/><path d="M1314 31.2L1319.6 25.2L1322.2 27.6L1316.5 33.6z" fill="#c8c8c8" stroke="#2a2a2a" stroke-width="0.4"/><path d="M1310.8 35.2L1312 31.5L1314 31.2L1316.5 33.6L1316 35z" fill="#47b6c4"/><path d="M1316.6 35.3a2.2 2.2 0 0 0 3.6 -2.2" fill="none" stroke="#c8c8c8" stroke-width="1"/><rect x="1337" y="21" width="18" height="18" fill="#5285a6"/><rect x="1340.4" y="24.4" width="11.3" height="11.3" fill="#dedede" stroke="#2a2a2a" stroke-width="0.8"/><path d="M1341.8 25.9h2v2h-2zM1341.8 28.95h2v2h-2zM1341.8 32.0h2v2h-2zM1344.85 25.9h2v2h-2zM1344.85 28.95h2v2h-2zM1344.85 32.0h2v2h-2zM1347.8999999999999 25.9h2v2h-2zM1347.8999999999999 28.95h2v2h-2zM1347.8999999999999 32.0h2v2h-2z" fill="#1a1a1a"/><rect x="1358.6" y="24.6" width="13.2" height="10.8" fill="#3a3a3a" stroke="#c8c8c8" stroke-width="1.2"/><rect x="1360" y="27.4" width="10.6" height="5.4" fill="#3a3a3a" stroke="#c8c8c8" stroke-width="1"/><path d="M1359.6 25.9H1371M1359.6 34.2H1371" stroke="#c8c8c8" stroke-width="0.9" stroke-dasharray="1.6 1.1"/><rect x="1377.6" y="24.6" width="13" height="10.8" fill="#3a3a3a" stroke="#c8c8c8" stroke-width="1.3"/><circle cx="1384" cy="30" r="3.1" fill="#47b6c4"/><rect x="1394.5" y="21" width="17.2" height="18" fill="#3d3d3d" stroke="#333" stroke-width="0.6"/><rect x="1396.2" y="24" width="13.8" height="12" fill="#555"/><circle cx="1403" cy="30" r="3.9" fill="#474747"/><rect x="1415.6" y="24.6" width="13" height="10.8" fill="#3a3a3a" stroke="#c8c8c8" stroke-width="1.2"/><path d="M1421.9 25.4V35M1416 30H1428.4" stroke="#47b6c4" stroke-width="1.3" stroke-dasharray="1.1 1"/><rect x="1434.6" y="24.6" width="13" height="10.8" fill="#3a3a3a" stroke="#c8c8c8" stroke-width="1.2"/><path d="M1436 34L1438.7 29.8L1442 34z" fill="#47b6c4"/><circle cx="1443.6" cy="28.2" r="2.5" fill="#47b6c4"/><rect x="1453.6" y="24.6" width="13" height="10.8" fill="#3a3a3a" stroke="#c8c8c8" stroke-width="1.2"/><path d="M1455.8 26H1464.3V28.2H1463.4L1463 27.2H1461V33.6H1462.2V34.5H1458.2V33.6H1459.3V27.2H1457.2L1456.8 28.2H1455.8z" fill="#47b6c4"/><path d="M1490.5 23L1497 26.6V33.8L1490.5 37.4L1484 33.8V26.6z" fill="none" stroke="#c8c8c8" stroke-width="1.1"/><path d="M1484 26.6L1490.5 30.2L1497 26.6M1490.5 30.2V37.4" fill="none" stroke="#777" stroke-width="0.6"/><rect x="1500" y="21" width="18" height="18" fill="#5285a6"/><path d="M1502.3 26.5L1509.3 30.2V37.3L1502.3 33.9z" fill="#42b2c2"/><path d="M1516.3 26.5L1509.3 30.2V37.3L1516.3 33.9z" fill="#50c4d2"/><path d="M1509.3 22.5L1516.3 26.5L1509.3 30.2L1502.3 26.5z" fill="#80d8e2"/><path d="M1509.3 22.5L1516.3 26.5V33.9L1509.3 37.3L1502.3 33.9V26.5zM1502.3 26.5L1509.3 30.2L1516.3 26.5M1509.3 30.2V37.3" fill="none" stroke="#1e1e1e" stroke-width="0.8"/><defs><clipPath id="hs"><path d="M1528 23.4A6.5 6.5 0 0 1 1528 36.4z"/></clipPath></defs><path d="M1528 23.4A6.5 6.5 0 0 0 1528 36.4z" fill="#c8c8c8"/><path d="M1528 23.4A6.5 6.5 0 0 1 1528 36.4z" fill="#e8e8e8"/><path d="M1528.0 23.4h1.65v1.65h-1.65zM1528.0 26.7h1.65v1.65h-1.65zM1528.0 30.0h1.65v1.65h-1.65zM1528.0 33.3h1.65v1.65h-1.65zM1529.65 25.049999999999997h1.65v1.65h-1.65zM1529.65 28.349999999999998h1.65v1.65h-1.65zM1529.65 31.65h1.65v1.65h-1.65zM1529.65 34.949999999999996h1.65v1.65h-1.65zM1531.3 23.4h1.65v1.65h-1.65zM1531.3 26.7h1.65v1.65h-1.65zM1531.3 30.0h1.65v1.65h-1.65zM1531.3 33.3h1.65v1.65h-1.65zM1532.95 25.049999999999997h1.65v1.65h-1.65zM1532.95 28.349999999999998h1.65v1.65h-1.65zM1532.95 31.65h1.65v1.65h-1.65zM1532.95 34.949999999999996h1.65v1.65h-1.65z" fill="#111" clip-path="url(#hs)"/><path d="M1542.5 27.5L1547.5 30.2V36L1542.5 33.4zM1552.5 27.5L1547.5 30.2V36L1552.5 33.4z" fill="#47b6c4"/><path d="M1547.5 24.6L1551.5 26.8L1547.5 29L1543.5 26.8z" fill="#47b6c4"/><path d="M1547.5 22.8L1554 26.4V33.8L1547.5 37.4L1541 33.8V26.4zM1541 26.4L1547.5 30.2L1554 26.4M1547.5 30.2V37.4" fill="none" stroke="#c8c8c8" stroke-width="1"/><rect x="1557" y="21" width="18" height="18" fill="#5285a6"/><defs><clipPath id="cs"><circle cx="1566" cy="30" r="6.7"/></clipPath></defs><circle cx="1566" cy="30" r="6.7" fill="#e8e8e8"/><path d="M1559.2 23.2h1.7v1.7h-1.7zM1559.2 26.599999999999998h1.7v1.7h-1.7zM1559.2 30.0h1.7v1.7h-1.7zM1559.2 33.4h1.7v1.7h-1.7zM1560.9 24.9h1.7v1.7h-1.7zM1560.9 28.299999999999997h1.7v1.7h-1.7zM1560.9 31.7h1.7v1.7h-1.7zM1560.9 35.1h1.7v1.7h-1.7zM1562.6000000000001 23.2h1.7v1.7h-1.7zM1562.6000000000001 26.599999999999998h1.7v1.7h-1.7zM1562.6000000000001 30.0h1.7v1.7h-1.7zM1562.6000000000001 33.4h1.7v1.7h-1.7zM1564.3 24.9h1.7v1.7h-1.7zM1564.3 28.299999999999997h1.7v1.7h-1.7zM1564.3 31.7h1.7v1.7h-1.7zM1564.3 35.1h1.7v1.7h-1.7zM1566.0 23.2h1.7v1.7h-1.7zM1566.0 26.599999999999998h1.7v1.7h-1.7zM1566.0 30.0h1.7v1.7h-1.7zM1566.0 33.4h1.7v1.7h-1.7zM1567.7 24.9h1.7v1.7h-1.7zM1567.7 28.299999999999997h1.7v1.7h-1.7zM1567.7 31.7h1.7v1.7h-1.7zM1567.7 35.1h1.7v1.7h-1.7zM1569.4 23.2h1.7v1.7h-1.7zM1569.4 26.599999999999998h1.7v1.7h-1.7zM1569.4 30.0h1.7v1.7h-1.7zM1569.4 33.4h1.7v1.7h-1.7zM1571.1000000000001 24.9h1.7v1.7h-1.7zM1571.1000000000001 28.299999999999997h1.7v1.7h-1.7zM1571.1000000000001 31.7h1.7v1.7h-1.7zM1571.1000000000001 35.1h1.7v1.7h-1.7z" fill="#111" clip-path="url(#cs)"/><circle cx="1585" cy="28.8" r="3.2" fill="#c8c8c8"/><path d="M1582.8 30.5L1584 34H1586L1587.2 30.5z" fill="#c8c8c8"/><rect x="1584" y="35.2" width="2" height="1.6" fill="#c8c8c8"/><rect x="1584.2" y="23" width="1.6" height="1.6" fill="#c8c8c8"/><path d="M1580.6 24.8l1 1 -1 1 -1 -1z M1589.4 24.8l1 1 -1 1 -1 -1z" fill="#c8c8c8"/><rect x="1578.2" y="28.9" width="1.8" height="1" fill="#c8c8c8"/><rect x="1590" y="28.9" width="1.8" height="1" fill="#c8c8c8"/><circle cx="1606.3" cy="29.4" r="4.6" fill="#47b6c4"/><path d="M1597.4 31.8L1600.6 29.8M1597.8 33.6L1601.6 31.4M1599 35L1602.8 33" stroke="#c8c8c8" stroke-width="0.9"/><circle cx="1634" cy="27.5" r="5" fill="#c8c8c8"/><path d="M1631.5 29.5l-0.8 2M1633.5 30l-0.8 2M1635.5 29.8l-0.8 2" stroke="#444" stroke-width="0.8"/><path d="M1627.5 33.4L1630 36H1640.5L1640 33.4" fill="none" stroke="#47b6c4" stroke-width="1.1" stroke-dasharray="1.1 0.9"/><circle cx="1650" cy="32" r="5" fill="#5a5a5a"/><circle cx="1652" cy="29" r="4.5" fill="#7a7a7a"/><circle cx="1653" cy="26" r="3" fill="#c8c8c8"/></svg>
<svg style="left:0;top:0" width="1653" height="483">
<defs>
<linearGradient id="vbg" x1="0" y1="40" x2="0" y2="483" gradientUnits="userSpaceOnUse"><stop offset="0" stop-color="#889db2"/><stop offset="1" stop-color="#5b6978"/></linearGradient>
<clipPath id="vclip"><rect x="1182" y="40" width="471" height="443"/></clipPath>
<clipPath id="pclip"><path d="M1342.40 397.90C1341.47 387.33 1338.50 354.15 1336.80 334.50C1335.10 314.85 1333.30 293.38 1332.20 280.00C1331.10 266.62 1330.50 263.47 1330.20 254.20C1329.90 244.93 1329.83 234.32 1330.40 224.40C1330.97 214.48 1332.23 202.97 1333.60 194.70C1334.97 186.43 1336.73 180.60 1338.60 174.80C1340.47 169.00 1342.90 164.12 1344.80 159.90C1346.70 155.68 1345.85 155.83 1350.00 149.50C1354.15 143.17 1362.28 130.83 1369.70 121.90C1377.12 112.97 1387.68 102.18 1394.50 95.90C1401.32 89.62 1404.40 87.93 1410.60 84.20C1416.80 80.47 1424.05 76.52 1431.70 73.50C1439.35 70.48 1449.47 67.88 1456.50 66.10C1463.53 64.32 1468.32 63.48 1473.90 62.80C1479.48 62.12 1482.67 61.62 1490.00 62.00C1497.33 62.38 1510.13 63.58 1517.90 65.10C1525.67 66.62 1529.77 68.55 1536.60 71.10C1543.43 73.65 1551.47 76.37 1558.90 80.40C1566.33 84.43 1575.30 90.80 1581.20 95.30C1587.10 99.80 1590.88 103.98 1594.30 107.40C1597.72 110.82 1599.98 113.12 1601.70 115.80C1603.42 118.48 1604.05 121.30 1604.60 123.50C1605.15 125.70 1605.20 126.28 1605.00 129.00C1604.80 131.72 1604.72 134.68 1603.40 139.80C1602.08 144.92 1599.80 153.07 1597.10 159.70C1594.40 166.33 1590.92 173.38 1587.20 179.60C1583.48 185.82 1579.35 191.22 1574.80 197.00C1570.25 202.78 1564.45 208.80 1559.90 214.30C1555.35 219.80 1551.92 225.75 1547.50 230.00C1543.08 234.25 1537.40 236.93 1533.40 239.80C1529.40 242.67 1527.63 244.93 1523.50 247.20C1519.37 249.47 1512.63 252.10 1508.60 253.40C1504.57 254.70 1500.85 254.73 1499.30 255.00L1498.3 260L1497.6 320L1496.4 386.7C1495.47 389.82 1496.08 400.43 1490.80 405.40C1485.52 410.37 1473.17 413.70 1464.70 416.50C1456.23 419.30 1447.45 421.02 1440.00 422.20C1432.55 423.38 1427.58 423.43 1420.00 423.60C1412.42 423.77 1403.08 424.07 1394.50 423.20C1385.92 422.33 1375.95 420.77 1368.50 418.40C1361.05 416.03 1354.15 412.42 1349.80 409.00C1345.45 405.58 1343.63 399.75 1342.40 397.90Z"/></clipPath>
<radialGradient id="bend" cx="1538" cy="232" r="205" fx="1512" fy="243" gradientUnits="userSpaceOnUse"><stop offset="0" stop-color="#000"/><stop offset="0.03" stop-color="#200000"/><stop offset="0.055" stop-color="#7a0400"/><stop offset="0.08" stop-color="#b01200"/><stop offset="0.12" stop-color="#bc3a0c"/><stop offset="0.17" stop-color="#b85a10"/><stop offset="0.22" stop-color="#a06410"/><stop offset="0.27" stop-color="#846c12"/><stop offset="0.32" stop-color="#5a7016"/><stop offset="0.36" stop-color="#26741e"/><stop offset="0.4" stop-color="#0c722c"/><stop offset="0.44" stop-color="#0a6e5a"/><stop offset="0.48" stop-color="#1268a8"/><stop offset="0.53" stop-color="#1a66cc"/><stop offset="0.62" stop-color="#2a58d8"/><stop offset="0.69" stop-color="#3e4adc"/><stop offset="0.80" stop-color="#5a30da"/><stop offset="0.93" stop-color="#6c14d8"/></radialGradient>
<linearGradient id="gmask" x1="0" y1="254" x2="0" y2="272" gradientUnits="userSpaceOnUse"><stop offset="0" stop-color="#fff"/><stop offset="1" stop-color="#000"/></linearGradient>
<mask id="upmask" maskUnits="userSpaceOnUse" x="1182" y="40" width="471" height="443"><rect x="1182" y="40" width="471" height="443" fill="url(#gmask)"/></mask>
<linearGradient id="band" x1="0" y1="195" x2="0" y2="272" gradientUnits="userSpaceOnUse"><stop offset="0" stop-color="#3050dc" stop-opacity="0"/><stop offset="0.45" stop-color="#3556dc" stop-opacity="0.5"/><stop offset="0.75" stop-color="#2262d4" stop-opacity="0.95"/><stop offset="0.88" stop-color="#1670b8" stop-opacity="1"/><stop offset="1" stop-color="#0e7a50" stop-opacity="1"/></linearGradient>
<linearGradient id="bandmaskg" x1="1400" y1="0" x2="1475" y2="0" gradientUnits="userSpaceOnUse"><stop offset="0" stop-color="#fff"/><stop offset="1" stop-color="#000"/></linearGradient>
<mask id="bandmask" maskUnits="userSpaceOnUse" x="1182" y="40" width="471" height="443"><rect x="1182" y="40" width="471" height="443" fill="url(#bandmaskg)"/></mask>
<linearGradient id="cylshade" x1="1333" y1="0" x2="1500" y2="0" gradientUnits="userSpaceOnUse"><stop offset="0" stop-color="#000" stop-opacity="0.95"/><stop offset="0.04" stop-color="#000" stop-opacity="0.7"/><stop offset="0.12" stop-color="#000" stop-opacity="0.3"/><stop offset="0.35" stop-color="#000" stop-opacity="0.08"/><stop offset="0.7" stop-color="#000" stop-opacity="0"/><stop offset="1" stop-color="#000" stop-opacity="0.06"/></linearGradient>
<linearGradient id="cylv" x1="0" y1="270" x2="0" y2="390" gradientUnits="userSpaceOnUse"><stop offset="0" stop-color="#000"/><stop offset="1" stop-color="#fff"/></linearGradient>
<mask id="cylmask" maskUnits="userSpaceOnUse" x="1182" y="40" width="471" height="443"><rect x="1182" y="40" width="471" height="443" fill="url(#cylv)"/></mask>
<filter id="blur3" x="-20%" y="-20%" width="140%" height="140%"><feGaussianBlur stdDeviation="3"/></filter>
<filter id="blur4" x="-20%" y="-20%" width="140%" height="140%"><feGaussianBlur stdDeviation="5"/></filter>
</defs>
<g clip-path="url(#vclip)">
<rect x="1182" y="40" width="471" height="443" fill="url(#vbg)"/>
<path d="M1182 471.97L1653 404.76M1182 352.06L1653 311.90M1182 300.97L1653 272.33M1182 272.66L1653 250.40M1182 254.67L1653 236.47M1182 242.23L1653 226.84M1182 233.12L1653 219.78M1182 226.15L1653 214.39M1182 220.65L1653 210.13M1182 216.20L1653 206.68M1182 212.53L1653 203.84M1182 209.44L1653 201.45M1182 206.81L1653 199.41M1182 204.55L1653 197.66M1182 202.57L1653 196.13M1182 200.84L1653 194.79M1182 199.31L1653 193.60M1182 197.94L1653 192.54M1182 196.71L1653 191.59M1182 195.60L1653 190.73M1190.70 195.51L117.40 483M1225.16 195.15L601.40 483M1258.50 194.81L1085.40 483M1290.77 194.47L1569.40 483M1322.02 194.15L2053.40 483M1352.31 193.84L2537.40 483M1381.66 193.53L3021.40 483M1410.13 193.24L3505.40 483M1437.75 192.95L3989.40 483M1464.56 192.68L4473.40 483M1490.61 192.41L4957.40 483M1515.91 192.15L5441.40 483M1540.50 191.89L5925.40 483M1564.41 191.64L6409.40 483" stroke="#433f3c" stroke-width="1" fill="none"/>
<g clip-path="url(#pclip)">
<rect x="1320" y="50" width="300" height="390" fill="#006b2d"/>
<g mask="url(#upmask)"><rect x="1320" y="50" width="300" height="230" fill="url(#bend)"/><rect x="1320" y="190" width="200" height="80" fill="url(#band)" mask="url(#bandmask)"/><path d="M1592 100 C1612 120, 1610 150, 1595 175 C1580 200, 1560 222, 1534 242" fill="none" stroke="#12782a" stroke-width="14" filter="url(#blur3)" opacity="0.85"/><path d="M1345 160 C1330 200, 1328 240, 1332 280" fill="none" stroke="#3a0a90" stroke-width="10" filter="url(#blur4)" opacity="0.45"/></g>
<rect x="1320" y="250" width="190" height="190" fill="url(#cylshade)" mask="url(#cylmask)"/>
</g>
<path d="M1499.5 246 C1503 239, 1510 236.5, 1517 236.5 C1524 236.8, 1529 238, 1533.4 239.8 C1522 248, 1510 254, 1499.3 254.7 Z" fill="#050505"/>
<clipPath id="gover"><path d="M1320 237 C1400 238, 1470 238, 1499 236 L1560 226 L1560 483 L1320 483z"/></clipPath>
<g clip-path="url(#gover)"><path d="M1182 471.97L1653 404.76M1182 352.06L1653 311.90M1182 300.97L1653 272.33M1182 272.66L1653 250.40M1182 254.67L1653 236.47M1182 242.23L1653 226.84M1182 233.12L1653 219.78M1182 226.15L1653 214.39M1182 220.65L1653 210.13M1182 216.20L1653 206.68M1182 212.53L1653 203.84M1182 209.44L1653 201.45M1182 206.81L1653 199.41M1182 204.55L1653 197.66M1182 202.57L1653 196.13M1182 200.84L1653 194.79M1182 199.31L1653 193.60M1182 197.94L1653 192.54M1182 196.71L1653 191.59M1182 195.60L1653 190.73M1190.70 195.51L117.40 483M1225.16 195.15L601.40 483M1258.50 194.81L1085.40 483M1290.77 194.47L1569.40 483M1322.02 194.15L2053.40 483M1352.31 193.84L2537.40 483M1381.66 193.53L3021.40 483M1410.13 193.24L3505.40 483M1437.75 192.95L3989.40 483M1464.56 192.68L4473.40 483M1490.61 192.41L4957.40 483M1515.91 192.15L5441.40 483M1540.50 191.89L5925.40 483M1564.41 191.64L6409.40 483" stroke="#433f3c" stroke-width="1" fill="none" clip-path="url(#pclip)"/></g>
<path d="M1409 46 L1410.6 84" stroke="#243a8a" stroke-width="1.1"/>
</g></svg>
<!--VIEWPORT-->
</body></html>
